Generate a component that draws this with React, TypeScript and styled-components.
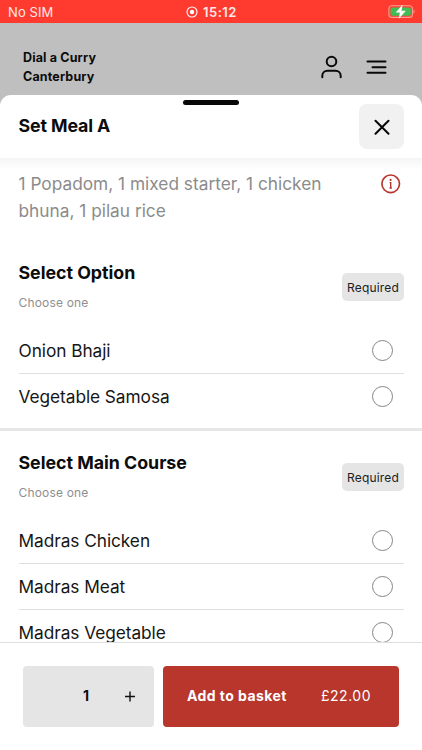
import React from "react";
import styled, { createGlobalStyle } from "styled-components";

const GlobalStyle = createGlobalStyle`
  * { box-sizing: border-box; }
  body { margin: 0; background: #fff; font-family: Inter, "Liberation Sans", sans-serif; color: #0c0c0c; }
  button { font: inherit; border: 0; padding: 0; color: inherit; }
  h1, h2, p { margin: 0; }
`;

const Screen = styled.div`
  width: 422px;
  height: 750px;
  overflow: hidden;
  display: flex;
  flex-direction: column;
  background: #bfbfbf;
`;

const StatusBar = styled.div`
  height: 23px;
  flex: none;
  padding: 1px 7px 0 8px;
  display: grid;
  grid-template-columns: 1fr auto 1fr;
  align-items: center;
  background: #ff3b30;
  color: #ffe9e7;
  font-size: 13px;
`;

const Carrier = styled.span`
  letter-spacing: 0.1px;
`;

const Clock = styled.span`
  display: flex;
  align-items: center;
  gap: 5px;
  font-weight: 600;
  letter-spacing: 0.5px;
  font-size: 13px;
`;

const BatteryIcon = styled.svg`
  justify-self: end;
`;

const SiteHeader = styled.header`
  height: 72px;
  flex: none;
  padding: 25px 34px 0 23px;
  display: flex;
  justify-content: space-between;
`;

const Brand = styled.div`
  width: 100px;
  font-size: 12.5px;
  line-height: 19px;
  font-weight: 700;
  letter-spacing: 0.15px;
`;

const HeaderIcons = styled.div`
  display: flex;
  gap: 22px;
  height: 38px;
  align-items: center;
`;

const Sheet = styled.main`
  flex: 1;
  min-height: 0;
  display: flex;
  flex-direction: column;
  position: relative;
  background: #fff;
  border-radius: 11px 11px 0 0;
`;

const Handle = styled.div`
  position: absolute;
  top: 5px;
  left: 183px;
  width: 56px;
  height: 5px;
  border-radius: 3px;
  background: #080808;
`;

const SheetHeader = styled.div`
  height: 63px;
  flex: none;
  padding: 0 18px 0 18.5px;
  display: flex;
  align-items: center;
  justify-content: space-between;
`;

const SheetTitle = styled.h1`
  margin-bottom: 2px;
  font-size: 17.8px;
  line-height: 24px;
  font-weight: 700;
  letter-spacing: -0.12px;
`;

const CloseButton = styled.button`
  width: 45px;
  height: 45px;
  border-radius: 8px;
  background: #f1f1f1;
  display: grid;
  place-items: center;
`;

const Content = styled.div`
  flex: 1;
  min-height: 0;
  overflow: hidden;
  background: linear-gradient(#f5f5f5, #fff 12px);
`;

const Description = styled.div`
  height: 90px;
  padding: 12px 21px 0 18.5px;
  display: flex;
  justify-content: space-between;
  color: #8b8b8b;
  font-size: 17.3px;
  line-height: 27px;
`;

const DescriptionText = styled.p`
  width: 320px;
`;

const InfoIcon = styled.svg`
  flex: none;
  margin-top: 4px;
`;

const Group = styled.section`
  border-bottom: 3px solid #e6e6e6;
  padding: 0 18px 8px 18.5px;
  height: 183px;
  & + & {
    height: auto;
    padding-top: 7px;
  }
`;

const GroupHeader = styled.div`
  height: 80px;
  padding-top: 13px;
  display: flex;
  justify-content: space-between;
`;

const GroupTitle = styled.h2`
  font-size: 17.8px;
  line-height: 24px;
  font-weight: 700;
  letter-spacing: -0.02px;
`;

const Hint = styled.p`
  margin-top: 10px;
  font-size: 12px;
  line-height: 16px;
  letter-spacing: 0.18px;
  color: #8f8f8f;
`;

const Badge = styled.span`
  width: 62px;
  height: 28px;
  margin-top: 12px;
  padding-top: 1px;
  border-radius: 5px;
  background: #e5e5e5;
  color: #202020;
  font-size: 12px;
  line-height: 28px;
  text-align: center;
  letter-spacing: 0.18px;
`;

const OptionRow = styled.label`
  height: 46px;
  padding-right: 11px;
  display: flex;
  align-items: center;
  justify-content: space-between;
  border-bottom: 1px solid #dfdfdf;
  font-size: 17.3px;
  letter-spacing: -0.06px;
  color: #161616;
  &:last-child { border-bottom-color: transparent; }
`;

const Radio = styled.span`
  width: 21px;
  height: 21px;
  border: 1px solid #858585;
  border-radius: 50%;
  background: #fff;
`;

const Footer = styled.footer`
  height: 108px;
  flex: none;
  padding: 22.5px 23px 22px;
  border-top: 1px solid #dfdfdf;
  background: #fff;
  display: flex;
  gap: 9px;
`;

const Quantity = styled.div`
  width: 131px;
  height: 61.5px;
  border-radius: 4px;
  background: #e5e5e5;
  display: grid;
  grid-template-columns: 41px 44px 43px;
  align-items: center;
  justify-items: center;
  font-size: 14px;
  font-weight: 700;
`;

const QuantityValue = styled.span`
  grid-column: 2;
  margin-bottom: 1px;
`;

const AddButton = styled.button`
  flex: 1;
  height: 61.5px;
  padding: 0 28px 1px 24px;
  border-radius: 4px;
  background: #b8362b;
  color: #fff;
  display: flex;
  align-items: center;
  justify-content: space-between;
  font-size: 14px;
`;

const AddLabel = styled.span`
  font-weight: 700;
  letter-spacing: 0.43px;
`;

const Price = styled.span`
  letter-spacing: 0.5px;
`;

const groups = [
  { title: "Select Option", options: ["Onion Bhaji", "Vegetable Samosa"] },
  { title: "Select Main Course", options: ["Madras Chicken", "Madras Meat", "Madras Vegetable"] },
];

export default function App() {
  return (
    <Screen>
      <GlobalStyle />
      <StatusBar>
        <Carrier>No SIM</Carrier>
        <Clock>
          <svg width="12" height="12" viewBox="0 0 12 12">
            <circle cx="6" cy="6" r="5" fill="none" stroke="#fff" strokeWidth="1.1" />
            <circle cx="6" cy="6" r="2.2" fill="#fff" />
          </svg>
          15:12
        </Clock>
        <BatteryIcon width="27" height="16" viewBox="0 0 27 16">
          <rect x=".9" y="1.8" width="23.5" height="11.6" rx="3" fill="none" stroke="#ff9c94" strokeWidth="1.1" />
          <rect x="2.5" y="3.4" width="20.3" height="8.4" rx="1.7" fill="#42bd55" />
          <path d="M25.5 5.8v3.8c1.5-.7 1.5-3.1 0-3.8Z" fill="#ff9c94" />
          <path d="M14.3 1.2 8.2 8.3h4l-1.1 5.9 6.2-7.2h-4.1Z" fill="#fff" stroke="#fff" strokeWidth=".5" strokeLinejoin="round" />
        </BatteryIcon>
      </StatusBar>
      <SiteHeader>
        <Brand>Dial a Curry Canterbury</Brand>
        <HeaderIcons>
          <svg width="24" height="26" viewBox="0 0 24 26" fill="none" stroke="#090909" strokeWidth="2" strokeLinecap="round">
            <circle cx="12.5" cy="7.5" r="4.8" />
            <path d="M3.3 23.2v-1.2c0-3.2 2.2-5.2 5.2-5.2h8c3 0 5.2 2 5.2 5.2v1.2" />
          </svg>
          <svg width="23" height="16" viewBox="0 0 23 16" fill="none" stroke="#090909" strokeWidth="2" strokeLinecap="round">
            <path d="M2.5 2.5h18M7.5 8.2h13M2.5 13.7h18" />
          </svg>
        </HeaderIcons>
      </SiteHeader>
      <Sheet>
        <Handle />
        <SheetHeader>
          <SheetTitle>Set Meal A</SheetTitle>
          <CloseButton aria-label="Close">
            <svg width="16" height="16" viewBox="0 0 16 16" fill="none" stroke="#080808" strokeWidth="2" strokeLinecap="round">
              <path d="m1.5 1.8 13 13M14.5 1.8l-13 13" />
            </svg>
          </CloseButton>
        </SheetHeader>
        <Content>
          <Description>
            <DescriptionText>1 Popadom, 1 mixed starter, 1 chicken bhuna, 1 pilau rice</DescriptionText>
            <InfoIcon width="20" height="20" viewBox="0 0 20 20" fill="none" stroke="#b8362f">
              <circle cx="9.7" cy="9.8" r="8.8" strokeWidth="1.7" />
              <path d="M8.6 8.6h1.1v5.4M8.5 14h2.4" strokeWidth="1.4" />
              <circle cx="9.6" cy="5.9" r="1.1" fill="#b8362f" stroke="none" />
            </InfoIcon>
          </Description>
          {groups.map((group) => (
            <Group key={group.title}>
              <GroupHeader>
                <div>
                  <GroupTitle>{group.title}</GroupTitle>
                  <Hint>Choose one</Hint>
                </div>
                <Badge>Required</Badge>
              </GroupHeader>
              {group.options.map((option) => (
                <OptionRow key={option}>
                  <span>{option}</span>
                  <Radio />
                </OptionRow>
              ))}
            </Group>
          ))}
        </Content>
        <Footer>
          <Quantity>
            <QuantityValue>1</QuantityValue>
            <svg width="12" height="12" viewBox="0 0 12 12" stroke="#111" strokeWidth="1.4">
              <path d="M1 6.5h10M6 1.5v10" />
            </svg>
          </Quantity>
          <AddButton>
            <AddLabel>Add to basket</AddLabel>
            <Price>£22.00</Price>
          </AddButton>
        </Footer>
      </Sheet>
    </Screen>
  );
}
